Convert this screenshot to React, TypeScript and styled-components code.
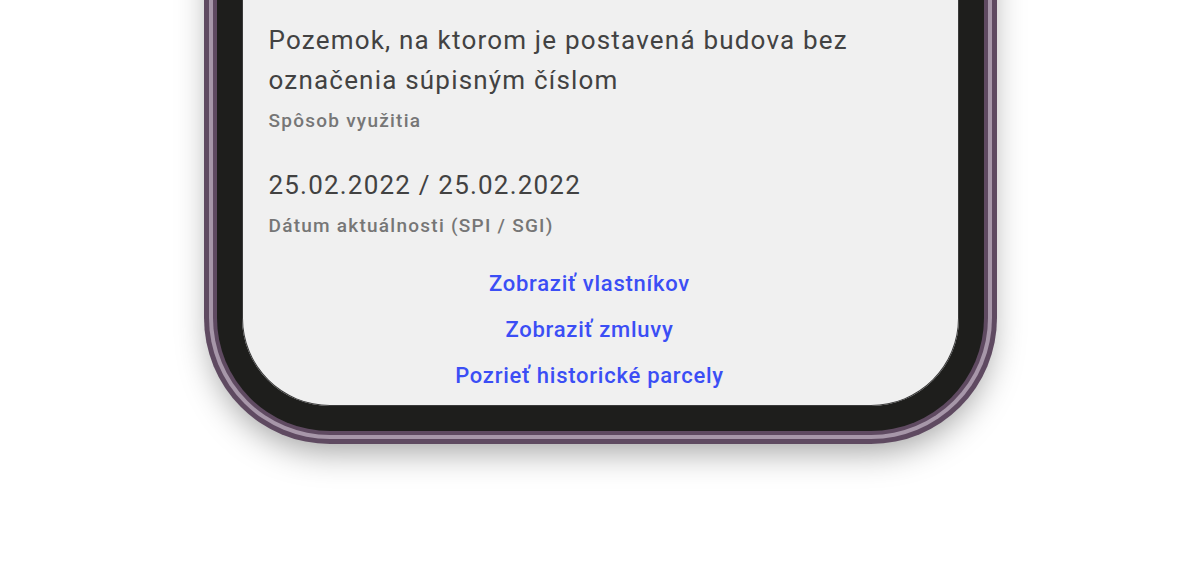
import React from 'react';
import styled, { createGlobalStyle } from 'styled-components';

const GlobalStyle = createGlobalStyle`
  html, body {
    margin: 0;
    padding: 0;
    background: #ffffff;
  }
  body {
    font-family: Roboto, "Noto Sans", "Liberation Sans", sans-serif;
  }
`;

const Stage = styled('div')`
  height: 576px;
  overflow: hidden;
  display: flex;
  justify-content: center;
  align-items: flex-end;
  padding-bottom: 145px;
  box-sizing: border-box;
`;

// black bezel, purple rim drawn as spread shadows so it follows the radius
const Bezel = styled('div')`
  flex: none;
  width: 767px;
  padding: 0 25px 25px;
  box-sizing: border-box;
  background: #1e1e1c;
  border-radius: 0 0 113px 113px;
  box-shadow:
    0 0 0 4px #5f4a61,
    0 0 0 8px #a797a9,
    0 0 0 13px #5f4a61,
    0 14px 34px 6px rgba(0, 0, 0, 0.38);
`;

const Screen = styled('div')`
  background: #f0f0f0;
  border-radius: 0 0 88px 88px;
  padding: 120px 48px 7px 27px;
  box-shadow: inset 0 0 0 1px #3a3a3a;
`;

const Field = styled('div')`
  & + & {
    margin-top: 32px;
  }
`;

const Value = styled('div')`
  font-size: 26px;
  line-height: 40px;
  color: #424242;
  letter-spacing: 1.2px;
`;

const Label = styled('div')`
  margin-top: 9px;
  font-size: 19px;
  font-weight: 500;
  line-height: 24px;
  color: #767676;
  letter-spacing: 1.25px;
`;

const Links = styled('div')`
  display: flex;
  flex-direction: column;
  align-items: center;
  margin-top: 23px;
`;

const LinkButton = styled('a')`
  font-size: 22px;
  font-weight: 500;
  line-height: 46px;
  color: #3b4ef5;
  letter-spacing: 0.75px;
  text-decoration: none;
  cursor: pointer;
`;

export default function App() {
  return (
    <>
      <GlobalStyle />
      <Stage>
        <Bezel>
          <Screen>
            <Field>
              <Value>
                Pozemok, na ktorom je postavená budova bez označenia súpisným
                číslom
              </Value>
              <Label>Spôsob využitia</Label>
            </Field>
            <Field>
              <Value>25.02.2022 / 25.02.2022</Value>
              <Label>Dátum aktuálnosti (SPI / SGI)</Label>
            </Field>
            <Links>
              <LinkButton>Zobraziť vlastníkov</LinkButton>
              <LinkButton>Zobraziť zmluvy</LinkButton>
              <LinkButton>Pozrieť historické parcely</LinkButton>
            </Links>
          </Screen>
        </Bezel>
      </Stage>
    </>
  );
}
